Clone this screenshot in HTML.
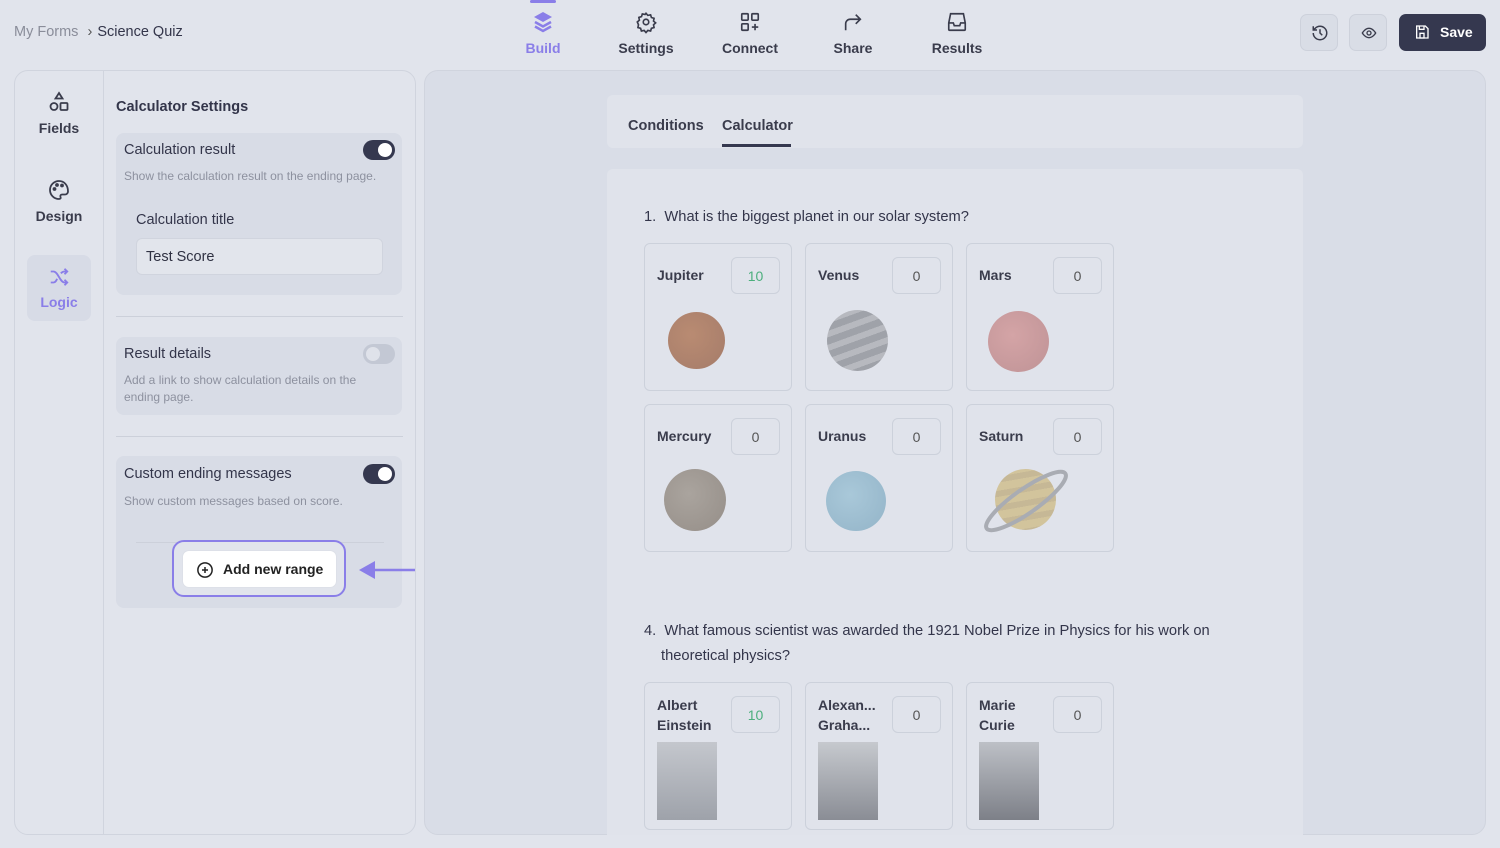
<!DOCTYPE html>
<html><head><meta charset="utf-8"><style>
*{box-sizing:border-box;margin:0;padding:0}
body{width:1500px;height:848px;overflow:hidden;background:#e1e4ec;font-family:"Liberation Sans",sans-serif;color:#2f3142;position:relative}
.a{position:absolute}
.nav{position:absolute;top:10px;text-align:center;font-size:14px;font-weight:bold;color:#3a3c4c;width:80px}
.nav svg{display:block;margin:0 auto 6px}
.card{position:absolute;background:#d8dce6;border-radius:8px}
.tog{position:absolute;width:32px;height:20px;border-radius:10px;background:#35384f}
.tog:after{content:"";position:absolute;right:3px;top:3px;width:14px;height:14px;border-radius:50%;background:#fff}
.tog.off{background:#c3c8d4}.tog.off:after{left:3px;right:auto;background:#dfe2ea}
.t{font-size:14.5px;color:#33354a}
.s{font-size:12px;color:#8d919f;line-height:17px}
.opt{position:absolute;width:148px;height:148px;border:1px solid #ccd1db;border-radius:6px;background:#e0e3eb}
.opt .n{position:absolute;left:12px;top:23px;font-size:14px;font-weight:bold;color:#3a3c4c}
.opt .v{position:absolute;left:86px;top:13px;width:49px;height:37px;border:1px solid #ccd1db;border-radius:6px;text-align:center;line-height:36px;font-size:14px;color:#555}
.opt .p{position:absolute;left:22px;top:68px;width:58px;height:58px;border-radius:50%}
.ph{position:absolute;left:12px;top:59px;width:60px;height:78px;background:linear-gradient(#c4c7cd,#9ea2aa)}
</style></head><body>
<div class="a" style="left:14px;top:24px;font-size:14.5px;color:#8a8d9a">My Forms <span style="color:#555;margin:0 5px">›</span><span style="color:#33354a">Science Quiz</span></div>
<div class="a" style="left:530px;top:0;width:26px;height:3px;background:#8a7ee8;border-radius:2px"></div>
<div class="nav" style="left:503px;color:#8a7ee8"><svg width="22" height="24" viewBox="0 0 22 24"><path d="M11 2l9 5-9 5-9-5z" fill="#8a7ee8"/><path d="M3 12l8 4.5 8-4.5M3 16.5l8 4.5 8-4.5" stroke="#8a7ee8" stroke-width="2.5" fill="none"/></svg>Build</div>
<div class="nav" style="left:606px"><svg width="22" height="24" viewBox="0 0 24 24" fill="none" stroke="#3a3c4c" stroke-width="1.8"><circle cx="12" cy="12" r="3"/><path d="M12 2.5l2 2.3 3-.6.9 2.9 2.9.9-.6 3 2.3 2-2.3 2 .6 3-2.9.9-.9 2.9-3-.6-2 2.3-2-2.3-3 .6-.9-2.9-2.9-.9.6-3L2.5 12l2.3-2-.6-3 2.9-.9.9-2.9 3 .6z"/></svg>Settings</div>
<div class="nav" style="left:710px"><svg width="22" height="24" viewBox="0 0 24 24" fill="none" stroke="#3a3c4c" stroke-width="1.8"><rect x="3" y="3" width="7" height="7" rx="1"/><rect x="14" y="3" width="7" height="7" rx="1"/><rect x="3" y="14" width="7" height="7" rx="1"/><path d="M17.5 14v7M14 17.5h7"/></svg>Connect</div>
<div class="nav" style="left:813px"><svg width="22" height="24" viewBox="0 0 24 24" fill="none" stroke="#3a3c4c" stroke-width="1.8"><path d="M4 21v-7a5 5 0 015-5h11M15 4l5 5-5 5"/></svg>Share</div>
<div class="nav" style="left:917px"><svg width="22" height="24" viewBox="0 0 24 24" fill="none" stroke="#3a3c4c" stroke-width="1.8"><path d="M5 3h14l2 10v7a1 1 0 01-1 1H4a1 1 0 01-1-1v-7z"/><path d="M3 13h5l1 3h6l1-3h5"/></svg>Results</div>
<div class="a" style="left:1300px;top:14px;width:38px;height:37px;border:1px solid #cdd1db;border-radius:7px;background:#d9dde6"><svg class="a" style="left:10px;top:9px" width="18" height="18" viewBox="0 0 24 24" fill="none" stroke="#3a3c4c" stroke-width="2"><path d="M3 12a9 9 0 109-9 9 9 0 00-6.5 2.8L3 8M3 3v5h5M12 7v5l3 3"/></svg></div>
<div class="a" style="left:1349px;top:14px;width:38px;height:37px;border:1px solid #cdd1db;border-radius:7px;background:#d9dde6"><svg class="a" style="left:10px;top:10px" width="18" height="16" viewBox="0 0 24 24" fill="none" stroke="#3a3c4c" stroke-width="2"><path d="M2 12s4-7 10-7 10 7 10 7-4 7-10 7S2 12 2 12z"/><circle cx="12" cy="12" r="3"/></svg></div>
<div class="a" style="left:1399px;top:14px;width:87px;height:37px;border-radius:7px;background:#35384f;color:#fff;font-size:14px;font-weight:bold;line-height:37px;padding-left:41px"><svg class="a" style="left:15px;top:10px" width="16" height="16" viewBox="0 0 24 24" fill="none" stroke="#fff" stroke-width="2"><path d="M4 3h13l4 4v14H4z"/><path d="M8 3v5h7V3M9 14h6v7H9z"/></svg>Save</div>

<div class="a" style="left:14px;top:70px;width:402px;height:765px;border:1px solid #d0d4de;border-radius:14px;background:#e1e4ec"></div>
<div class="a" style="left:103px;top:71px;width:1px;height:763px;background:#d0d4de"></div>
<div class="a" style="left:15px;top:90px;width:88px;text-align:center;font-size:14px;font-weight:bold;color:#3a3c4c"><svg width="24" height="24" viewBox="0 0 24 24" fill="none" stroke="#3a3c4c" stroke-width="1.8" style="display:block;margin:0 auto 6px"><path d="M12 3l3.5 5.5h-7z"/><circle cx="7" cy="16.5" r="3.5"/><rect x="13.5" y="13" width="7" height="7" rx="1"/></svg>Fields</div>
<div class="a" style="left:15px;top:178px;width:88px;text-align:center;font-size:14px;font-weight:bold;color:#3a3c4c"><svg width="24" height="24" viewBox="0 0 24 24" fill="none" stroke="#3a3c4c" stroke-width="1.8" style="display:block;margin:0 auto 6px"><path d="M12 3a9 9 0 100 18c1.5 0 2-1 1.5-2s0-2.5 1.5-2.5H18a3 3 0 003-3C21 7 17 3 12 3z"/><circle cx="7.5" cy="11" r="1" fill="#3a3c4c"/><circle cx="10" cy="7" r="1" fill="#3a3c4c"/><circle cx="15" cy="7.5" r="1" fill="#3a3c4c"/></svg>Design</div>
<div class="a" style="left:27px;top:255px;width:64px;height:66px;border-radius:8px;background:#d7dbe6"></div>
<div class="a" style="left:27px;top:266px;width:64px;text-align:center;font-size:14px;font-weight:bold;color:#8a7ee8"><svg width="22" height="22" viewBox="0 0 24 24" fill="none" stroke="#8a7ee8" stroke-width="2" style="display:block;margin:0 auto 6px"><path d="M3 6h3c5 0 7 12 12 12h3M18 15l3 3-3 3M3 18h3c2 0 3-2 4-4M14 8c1-1 2-2 4-2h3M18 3l3 3-3 3"/></svg>Logic</div>

<div class="a" style="left:116px;top:99px;font-size:14.5px;font-weight:bold;color:#33354a">Calculator Settings</div>
<div class="card" style="left:116px;top:133px;width:286px;height:162px"></div>
<div class="a t" style="left:124px;top:142px">Calculation result</div>
<div class="tog" style="left:363px;top:140px"></div>
<div class="a s" style="left:124px;top:168px">Show the calculation result on the ending page.</div>
<div class="a t" style="left:136px;top:212px">Calculation title</div>
<div class="a" style="left:136px;top:238px;width:247px;height:37px;border:1px solid #d0d4de;border-radius:6px;background:#e2e5ec;font-size:14.5px;line-height:36px;padding-left:9px">Test Score</div>
<div class="a" style="left:116px;top:316px;width:287px;height:1px;background:#ccd0da"></div>
<div class="card" style="left:116px;top:337px;width:286px;height:78px"></div>
<div class="a t" style="left:124px;top:346px">Result details</div>
<div class="tog off" style="left:363px;top:344px"></div>
<div class="a s" style="left:124px;top:372px;width:270px">Add a link to show calculation details on the ending page.</div>
<div class="a" style="left:116px;top:436px;width:287px;height:1px;background:#ccd0da"></div>
<div class="card" style="left:116px;top:456px;width:286px;height:152px"></div>
<div class="a t" style="left:124px;top:466px">Custom ending messages</div>
<div class="tog" style="left:363px;top:464px"></div>
<div class="a s" style="left:124px;top:493px">Show custom messages based on score.</div>
<div class="a" style="left:136px;top:542px;width:248px;height:1px;background:#ccd0da"></div>
<div class="a" style="left:172px;top:540px;width:174px;height:57px;border:2px solid #8a7ee8;border-radius:12px;background:#e1e4ec"></div>
<div class="a" style="left:182px;top:550px;width:155px;height:38px;border:1px solid #dde0e8;border-radius:7px;background:#fff;font-size:14px;font-weight:bold;color:#222;line-height:37px;padding-left:40px"><svg class="a" style="left:13px;top:10px" width="18" height="18" viewBox="0 0 24 24" fill="none" stroke="#222" stroke-width="2"><circle cx="12" cy="12" r="9.5"/><path d="M12 8v8M8 12h8"/></svg>Add new range</div>
<svg class="a" style="left:357px;top:559px" width="58" height="22"><path d="M58 11H14" stroke="#8a7ee8" stroke-width="2.5"/><path d="M2 11l16-9v18z" fill="#8a7ee8"/></svg>

<div class="a" style="left:424px;top:70px;width:1062px;height:765px;border-radius:14px;background:#d9dde7;border:1px solid #d0d4de"></div>
<div class="a" style="left:607px;top:95px;width:696px;height:53px;border-radius:6px;background:#e0e3eb"></div>
<div class="a" style="left:628px;top:118px;font-size:14.5px;font-weight:bold;color:#3a3c4c">Conditions</div>
<div class="a" style="left:722px;top:118px;font-size:14.5px;font-weight:bold;color:#3a3c4c">Calculator</div>
<div class="a" style="left:722px;top:144px;width:69px;height:3px;background:#35384f"></div>
<div class="a" style="left:607px;top:169px;width:696px;height:666px;border-radius:6px 6px 0 0;background:#e0e3eb"></div>
<div class="a" style="left:644px;top:209px;font-size:14.7px;color:#33354a">1.&nbsp; What is the biggest planet in our solar system?</div>

<div class="opt" style="left:644px;top:243px"><div class="n">Jupiter</div><div class="v" style="color:#4caf7d">10</div><div class="p" style="left:23px;width:57px;height:57px;background:radial-gradient(circle at 40% 40%,#b98b72,#a57c6a)"></div></div>
<div class="opt" style="left:805px;top:243px"><div class="n">Venus</div><div class="v">0</div><div class="p" style="left:21px;top:66px;width:61px;height:61px;background:repeating-linear-gradient(160deg,#9fa2a9 0 7px,#b7b9bf 7px 13px)"></div></div>
<div class="opt" style="left:966px;top:243px"><div class="n">Mars</div><div class="v">0</div><div class="p" style="left:21px;top:67px;width:61px;height:61px;background:radial-gradient(circle at 40% 40%,#d4a4a6,#bf9396)"></div></div>
<div class="opt" style="left:644px;top:404px"><div class="n">Mercury</div><div class="v">0</div><div class="p" style="left:19px;top:64px;width:62px;height:62px;background:radial-gradient(circle at 40% 40%,#aaa49e,#958e88)"></div></div>
<div class="opt" style="left:805px;top:404px"><div class="n">Uranus</div><div class="v">0</div><div class="p" style="left:20px;top:66px;width:60px;height:60px;background:radial-gradient(circle at 40% 40%,#a9c8d9,#93b4c8)"></div></div>
<div class="opt" style="left:966px;top:404px"><div class="n">Saturn</div><div class="v">0</div><div class="p" style="left:28px;top:64px;width:61px;height:61px;background:repeating-linear-gradient(170deg,#d2c49c 0 8px,#c6b896 8px 14px)"></div><svg class="a" style="left:14px;top:60px" width="90" height="72"><ellipse cx="45" cy="36" rx="48" ry="12" transform="rotate(-35 45 36)" fill="none" stroke="#a9acb3" stroke-width="4"/></svg></div>

<div class="a" style="left:644px;top:619px;font-size:14.7px;color:#33354a;line-height:25px">4.&nbsp; What famous scientist was awarded the 1921 Nobel Prize in Physics for his work on<br><span style="padding-left:17px">theoretical physics?</span></div>
<div class="opt" style="left:644px;top:682px"><div class="n" style="top:12px;line-height:20px">Albert<br>Einstein</div><div class="v" style="color:#4caf7d">10</div><div class="ph"></div></div>
<div class="opt" style="left:805px;top:682px"><div class="n" style="top:12px;line-height:20px">Alexan...<br>Graha...</div><div class="v">0</div><div class="ph" style="background:linear-gradient(#c6c9ce,#8a8d95)"></div></div>
<div class="opt" style="left:966px;top:682px"><div class="n" style="top:12px;line-height:20px">Marie<br>Curie</div><div class="v">0</div><div class="ph" style="background:linear-gradient(#bdc0c6,#7d8088)"></div></div>
</body></html>
